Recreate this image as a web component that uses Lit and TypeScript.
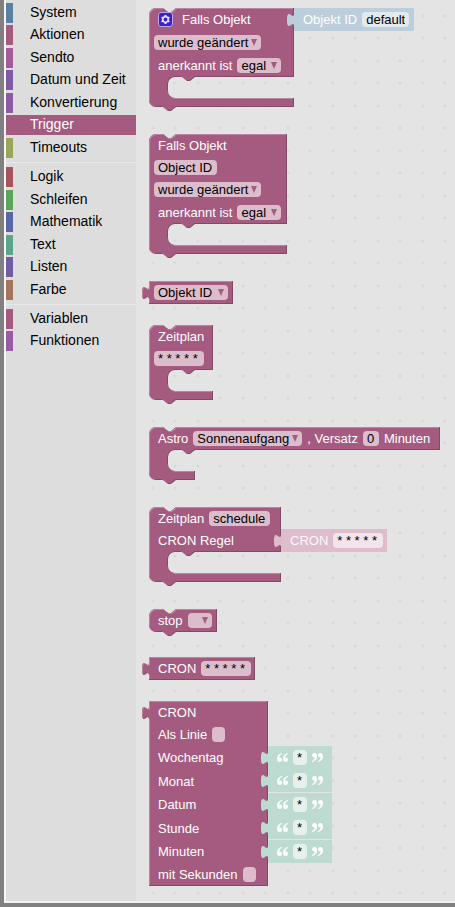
import { LitElement, html, svg, css, nothing } from "lit";
import { customElement, property, state } from "lit/decorators.js";
import { classMap } from "lit/directives/class-map.js";
import { styleMap } from "lit/directives/style-map.js";

type Field =
  | { kind: "label"; text: string }
  | { kind: "select"; text: string; width: number; name: string }
  | { kind: "input"; text: string; width: number; name: string }
  | { kind: "check"; name: string }
  | { kind: "gear" }
  | { kind: "quote"; close?: boolean };

interface Row {
  fields: Field[];
  height: number;
  value?: Block;
}

interface Block {
  tone: "trigger" | "system" | "cron" | "text";
  output?: boolean;
  statement?: boolean;
  armWidth?: number;
  width: number;
  rows: Row[];
}

const label = (text: string): Field => ({ kind: "label", text });
const select = (text: string, width: number, name: string): Field => ({ kind: "select", text, width, name });
const input = (text: string, width: number, name: string): Field => ({ kind: "input", text, width, name });
const check = (name: string): Field => ({ kind: "check", name });
const row = (height: number, fields: Field[], value?: Block): Row => ({ height, fields, value });

const INSET = 19;
const STATEMENT = 21;
const ARM = 9;
const NOTCH_RIGHT = "l5 4h3l5 -4";
const NOTCH_LEFT = "l-5 4h-3l-5 -4";

function outline(b: Block): string {
  const body = b.rows.reduce((sum, r) => sum + r.height, 0);
  const total = body + (b.statement ? STATEMENT + ARM : 0);
  let d = b.output ? "M0 0" : `M0 7a7 7 0 0 1 7 -7H14${NOTCH_RIGHT}`;
  d += `H${b.width}V${body}`;
  if (b.statement) {
    d += `H${INSET + 27}${NOTCH_LEFT}H${INSET + 7}a7 7 0 0 0 -7 7v7a7 7 0 0 0 7 7`;
    d += `H${b.armWidth ?? b.width}V${total}`;
  }
  d += b.output
    ? "H0V19c0 -9 -7 7 -7 -7s7 2 7 -7Z"
    : `H27${NOTCH_LEFT}H7a7 7 0 0 1 -7 -7Z`;
  return d;
}

const textValue = (name: string): Block => ({
  tone: "text",
  output: true,
  width: 64,
  rows: [row(23, [{ kind: "quote" }, input("*", 14, name), { kind: "quote", close: true }])],
});

const BLOCKS: Block[] = [
  {
    tone: "trigger", statement: true, width: 145,
    rows: [
      row(23, [{ kind: "gear" }, label("Falls Objekt")], {
        tone: "system", output: true, width: 120,
        rows: [row(23, [label("Objekt ID"), input("default", 47, "Objekt ID")])],
      }),
      row(23, [select("wurde geändert", 107, "Bedingung")]),
      row(23, [label("anerkannt ist"), select("egal", 44, "anerkannt ist")]),
    ],
  },
  {
    tone: "trigger", statement: true, width: 138,
    rows: [
      row(22, [label("Falls Objekt")]),
      row(22, [input("Object ID", 63, "Object ID")]),
      row(23, [select("wurde geändert", 107, "Bedingung")]),
      row(23, [label("anerkannt ist"), select("egal", 44, "anerkannt ist")]),
    ],
  },
  { tone: "trigger", output: true, width: 84, rows: [row(23, [select("Objekt ID", 74, "Objekt ID")])] },
  {
    tone: "trigger", statement: true, width: 64,
    rows: [row(22, [label("Zeitplan")]), row(23, [input("* * * * *", 50, "Zeitplan")])],
  },
  {
    tone: "trigger", statement: true, width: 291, armWidth: 46,
    rows: [
      row(23, [
        label("Astro"), select("Sonnenaufgang", 109, "Astro"),
        label(", Versatz"), input("0", 16, "Versatz"), label("Minuten"),
      ]),
    ],
  },
  {
    tone: "trigger", statement: true, width: 132,
    rows: [
      row(22, [label("Zeitplan"), input("schedule", 61, "Zeitplan")]),
      row(23, [label("CRON Regel")], {
        tone: "cron", output: true, width: 106,
        rows: [row(23, [label("CRON"), input("* * * * *", 50, "CRON")])],
      }),
    ],
  },
  { tone: "trigger", width: 68, rows: [row(23, [label("stop"), select("", 24, "stop")])] },
  { tone: "trigger", output: true, width: 106, rows: [row(23, [label("CRON"), input("* * * * *", 50, "CRON")])] },
  {
    tone: "trigger", output: true, width: 119,
    rows: [
      row(22, [label("CRON")]),
      row(23, [label("Als Linie"), check("Als Linie")]),
      row(23, [label("Wochentag")], textValue("Wochentag")),
      row(24, [label("Monat")], textValue("Monat")),
      row(23, [label("Datum")], textValue("Datum")),
      row(24, [label("Stunde")], textValue("Stunde")),
      row(23, [label("Minuten")], textValue("Minuten")),
      row(23, [label("mit Sekunden"), check("mit Sekunden")]),
    ],
  },
];

const CATEGORIES: [string, string][][] = [
  [
    ["System", "#5b80a5"], ["Aktionen", "#a55b80"], ["Sendto", "#a55b99"],
    ["Datum und Zeit", "#7f5ba5"], ["Konvertierung", "#8c5ba5"],
    ["Trigger", "#a55b80"], ["Timeouts", "#9aa55b"],
  ],
  [
    ["Logik", "#a5555b"], ["Schleifen", "#5ba55b"], ["Mathematik", "#5b67a5"],
    ["Text", "#5ba58c"], ["Listen", "#745ba5"], ["Farbe", "#a5745b"],
  ],
  [["Variablen", "#a55b80"], ["Funktionen", "#995ba5"]],
];

@customElement("flyout-block")
class FlyoutBlock extends LitElement {
  @property({ attribute: false }) block!: Block;

  static styles = css`
    :host { display: block; position: relative; width: max-content; }
    .trigger { --fill: #a55b80; --light: #bb84a0; --dark: #84496a; --pill: #dbbdcc; --ink: #fff; }
    .system { --fill: #bccddc; --pill: #e2e9ef; --ink: #fff; }
    .cron { --fill: #debccc; --pill: #f1e4ea; --ink: #fdf8fb; }
    .text { --fill: #bddbd1; --pill: #e5f1ed; --ink: #fff; }
    .shape { position: absolute; left: 0; top: 0; width: 1px; height: 1px; overflow: visible; }
    .dark { fill: var(--dark); }
    .light { fill: var(--light); }
    .main { fill: var(--fill); }
    .body { position: relative; font: 13px/15px "Liberation Sans", Arial, sans-serif; color: var(--ink); }
    .statement { padding-bottom: 30px; }
    .row { display: flex; align-items: stretch; width: max-content; }
    .fields { display: flex; align-items: center; gap: 5px; padding-left: 5px; box-sizing: border-box; white-space: nowrap; }
    .label:first-child, .quote:first-child { margin-left: 4px; }
    .pill {
      display: flex; align-items: center; box-sizing: border-box; height: 15px;
      border-radius: 4px; background: var(--pill); position: relative;
    }
    .control {
      appearance: none; width: 100%; height: 15px; margin: 0; padding: 0 4px; box-sizing: border-box;
      border: 0; outline: 0; background: none; font: inherit; color: #000; min-width: 0;
    }
    .arrow { position: absolute; right: 4px; top: 4px; width: 6px; height: 7px; fill: #a55b80; pointer-events: none; }
    .check { appearance: none; width: 13px; height: 15px; margin: 0; border-radius: 4px; background: var(--pill); }
    .gear {
      width: 15px; height: 15px; margin: 0 4px; padding: 0; box-sizing: border-box; display: block;
      border: 1px solid #b9a6ea; border-radius: 3px; background: #3d22bd;
    }
    .gearicon { display: block; width: 13px; height: 13px; }
    .quote { width: 11px; height: 11px; fill: var(--ink); }
  `;

  private field(f: Field) {
    switch (f.kind) {
      case "label":
        return html`<span class="label">${f.text}</span>`;
      case "select":
        return html`<span class="pill" style=${styleMap({ width: `${f.width}px` })}>
          <select class="control" aria-label=${f.name}><option>${f.text}</option></select>
          <svg class="arrow" viewBox="0 0 6 7" aria-hidden="true"><path d="M0 0H6L3 7Z" /></svg>
        </span>`;
      case "input":
        return html`<span class="pill" style=${styleMap({ width: `${f.width}px` })}>
          <input class="control" type="text" aria-label=${f.name} .value=${f.text} />
        </span>`;
      case "check":
        return html`<input class="check" type="checkbox" aria-label=${f.name} />`;
      case "gear":
        return html`<button class="gear" type="button" aria-label="Einstellungen">
          <svg class="gearicon" viewBox="0 0 13 13" aria-hidden="true">
            <g stroke="#e8e2fa" stroke-width="2">
              <path d="M6.500 2V11M2.600 4.250L10.400 8.750M2.600 8.750L10.400 4.250" />
            </g>
            <circle cx="6.500" cy="6.500" r="3.400" fill="#e8e2fa" />
            <circle cx="6.500" cy="6.500" r="1.900" fill="#3d22bd" />
          </svg>
        </button>`;
      case "quote":
        return html`<svg class="quote" viewBox="0 0 11 11" aria-hidden="true">
          <g transform=${f.close ? "rotate(180 5.5 5.5)" : "rotate(0)"}>
            <path d="M5 1C2 1.500 0 3.700 0 6.800C0 8.900 1 10 2.600 10C4 10 5 9 5 7.700C5 6.300 4 5.400 2.300 5.500C2.400 3.700 3.300 2.500 5 2Z" />
            <path d="M11 1C8 1.500 6 3.700 6 6.800C6 8.900 7 10 8.600 10C10 10 11 9 11 7.700C11 6.300 10 5.400 8.300 5.500C8.400 3.700 9.300 2.500 11 2Z" />
          </g>
        </svg>`;
    }
  }

  private shape(b: Block) {
    const d = outline(b);
    if (b.tone !== "trigger") return svg`<path class="main" d=${d} />`;
    return svg`
      <clipPath id="edge"><path d=${d} /></clipPath>
      <clipPath id="face"><path d=${d} transform="translate(-1 -1)" /></clipPath>
      <path class="dark" d=${d} />
      <g clip-path="url(#edge)">
        <g clip-path="url(#face)">
          <path class="light" d=${d} />
          <path class="main" d=${d} transform="translate(1 1)" />
        </g>
      </g>`;
  }

  render() {
    const b = this.block;
    return html`<div class=${b.tone}>
      <svg class="shape" aria-hidden="true">${this.shape(b)}</svg>
      <div class=${classMap({ body: true, statement: !!b.statement })} style=${styleMap({ width: `${b.width}px` })}>
        ${b.rows.map(
          (r) => html`<div class="row" style=${styleMap({ height: `${r.height}px` })}>
            <div class="fields" style=${styleMap({ width: `${b.width}px` })}>${r.fields.map((f) => this.field(f))}</div>
            ${r.value ? html`<flyout-block .block=${r.value}></flyout-block>` : nothing}
          </div>`
        )}
      </div>
    </div>`;
  }
}

@customElement("app-root")
class AppRoot extends LitElement {
  @state() private active = "Trigger";

  static styles = css`
    :host {
      display: flex; min-height: 100vh; box-sizing: border-box;
      border-left: 4px solid #808080; border-bottom: 4px solid #808080;
      background: #e4e4e4; font-family: "Liberation Sans", Arial, sans-serif;
    }
    .frame { display: flex; flex: 1; min-width: 0; border-left: 2px solid #f7f7f7; border-bottom: 2px solid #f2f2f2; }
    .toolbox { flex: none; width: 130px; box-sizing: border-box; padding-top: 3px; background: #ddd; }
    .group { list-style: none; margin: 0; padding: 0; }
    .group + .group { border-top: 1px solid #e8e8e8; margin-top: 4px; padding-top: 4px; }
    .item { margin-bottom: 2px; }
    .group:nth-child(odd) .item:nth-child(even), .group:nth-child(even) .item:nth-child(odd) { margin-bottom: 3px; }
    .group .item:last-child { margin-bottom: 0; }
    .category {
      display: flex; width: 100%; height: 20px; padding: 0; border: 0; background: none;
      font: 14px/18px "Liberation Sans", Arial, sans-serif; color: #000; text-align: left; cursor: pointer;
    }
    .swatch { width: 7px; height: 20px; margin-right: 17px; }
    .active { background: #a55b80; color: #fff; }
    .flyout {
      --dot: radial-gradient(circle at 2px 2px, #dadada 1px, transparent 2px);
      flex: 1; min-width: 0; box-sizing: border-box; overflow: hidden; padding: 8px 0 12px 13px;
      display: flex; flex-direction: column; align-items: flex-start;
      background-color: #e4e4e4;
      background-image: var(--dot), var(--dot), var(--dot), var(--dot);
      background-size: 45px 45px;
      background-position: 37px 14px, 15px 14px, 37px 36px, 15px 36px;
    }
    .stack { margin-bottom: 25px; }
    .loop { margin-bottom: 27px; }
    .value { margin-bottom: 21px; }
    .value:last-child { margin-bottom: 0; }
  `;

  render() {
    return html`<div class="frame">
      <nav class="toolbox">
        ${CATEGORIES.map(
          (group) => html`<ul class="group">
            ${group.map(
              ([name, color]) => html`<li class="item">
                <button
                  type="button"
                  class=${classMap({ category: true, active: name === this.active })}
                  @click=${() => (this.active = name)}
                >
                  <span class="swatch" style=${styleMap({ background: color })}></span>${name}
                </button>
              </li>`
            )}
          </ul>`
        )}
      </nav>
      <main class="flyout">
        ${BLOCKS.map(
          (b) => html`<flyout-block
            class=${b.statement ? "loop" : b.output ? "value" : "stack"}
            .block=${b}
          ></flyout-block>`
        )}
      </main>
    </div>`;
  }
}
